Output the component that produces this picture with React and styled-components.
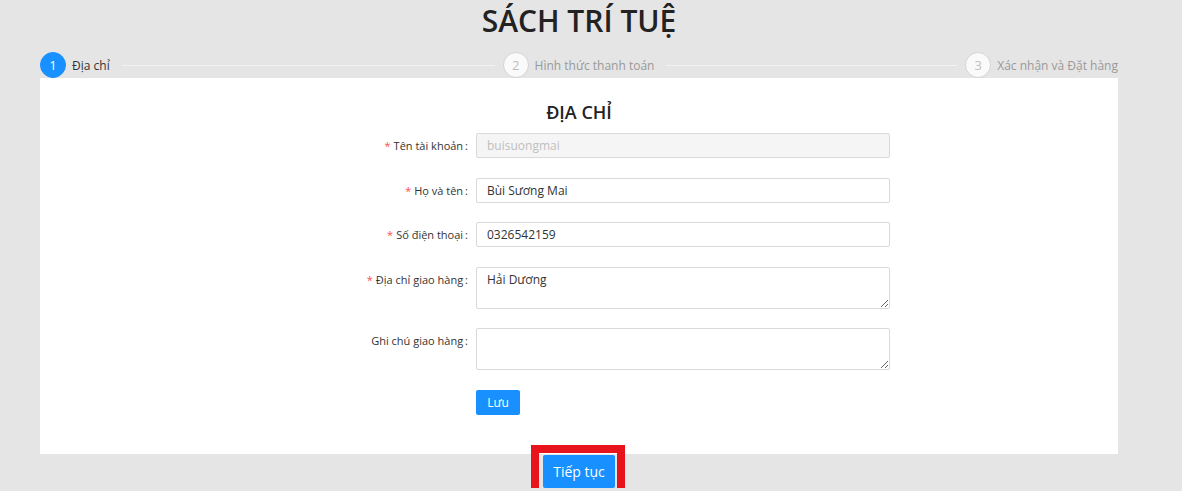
import React from "react";
import styled, { createGlobalStyle } from "styled-components";

const GlobalStyle = createGlobalStyle`
  html, body { margin: 0; padding: 0; }
  body {
    background: #e5e5e5;
    font-family: "Open Sans", "Noto Sans", sans-serif;
    color: rgba(0, 0, 0, 0.85);
  }
  * { box-sizing: border-box; }
`;

const Page = styled.div`
  width: 1078px;
  margin-left: 40px;
  display: flex;
  flex-direction: column;
`;

const Title = styled.h1`
  margin: 0 0 11px;
  text-align: center;
  font-size: 30px;
  font-weight: 600;
  line-height: 41px;
  color: #222;
`;

const Steps = styled.div`
  display: flex;
  align-items: center;
  height: 26px;
`;

const Step = styled.div`
  display: flex;
  align-items: center;
  flex: ${(p) => (p.$last ? "none" : "1 1 0")};
`;

const StepIcon = styled.span`
  width: 26px;
  height: 26px;
  border-radius: 50%;
  display: flex;
  align-items: center;
  justify-content: center;
  font-size: 13px;
  flex: none;
  background: ${(p) => (p.$active ? "#1890ff" : "#fafafa")};
  color: ${(p) => (p.$active ? "#fff" : "#bfbfbf")};
  border: 1px solid ${(p) => (p.$active ? "#1890ff" : "#d4d4d4")};
`;

const StepTitle = styled.span`
  margin-left: 6px;
  font-size: 12px;
  white-space: nowrap;
  color: ${(p) => (p.$active ? "#333" : "#9a9a9a")};
`;

const StepLine = styled.span`
  flex: 1;
  height: 1px;
  margin: 0 8px 0 12px;
  background: #f2f2f2;
`;

const Card = styled.div`
  background: #fff;
  padding: 22px 0 39px;
  display: flex;
  flex-direction: column;
`;

const Heading = styled.h2`
  margin: 0 0 9px;
  text-align: center;
  font-size: 18px;
  font-weight: 600;
  line-height: 24px;
  color: #222;
`;

const Form = styled.div`
  display: flex;
  flex-direction: column;
  gap: 19.5px;
`;

const Row = styled.div`
  display: grid;
  grid-template-columns: 436px 414px;
  align-items: start;
`;

const Label = styled.label`
  display: flex;
  justify-content: flex-end;
  align-items: center;
  height: 25px;
  padding-right: 8px;
  font-size: 11px;
  color: #333;
  white-space: nowrap;
`;

const Req = styled.span`
  color: #ff4d4f;
  margin-right: 3px;
  font-size: 11px;
`;

const Colon = styled.span`
  margin-left: 2px;
`;

const Input = styled.input`
  height: 25px;
  width: 100%;
  border: 1px solid #d9d9d9;
  border-radius: 2px;
  padding: 0 10px;
  font-family: inherit;
  font-size: 12px;
  color: ${(p) => (p.disabled ? "#bfbfbf" : "#333")};
  background: ${(p) => (p.disabled ? "#f5f5f5" : "#fff")};
  outline: none;
  display: block;
`;

const TextArea = styled.textarea`
  height: 42px;
  width: 100%;
  border: 1px solid #d9d9d9;
  border-radius: 2px;
  padding: 4px 10px;
  font-family: inherit;
  font-size: 12px;
  line-height: 16px;
  color: #333;
  resize: vertical;
  outline: none;
  display: block;
`;

const Button = styled.button`
  display: block;
  border: none;
  border-radius: 2px;
  background: #1890ff;
  color: #fff;
  font-family: inherit;
  cursor: pointer;
  padding: 0;
  width: ${(p) => p.$w}px;
  height: ${(p) => p.$h}px;
  font-size: ${(p) => p.$fs}px;
`;

const Footer = styled.div`
  display: flex;
  justify-content: center;
  padding-top: 1px;
`;

const Highlight = styled(Button)`
  position: relative;
  overflow: visible;
  &::after {
    content: "";
    position: absolute;
    left: -12px;
    right: -10px;
    top: -10px;
    bottom: -10px;
    border: 8px solid #e8141c;
    pointer-events: none;
  }
`;

const steps = ["Địa chỉ", "Hình thức thanh toán", "Xác nhận và Đặt hàng"];

const fields = [
  { label: "Tên tài khoản", required: true, value: "buisuongmai", disabled: true },
  { label: "Họ và tên", required: true, value: "Bùi Sương Mai" },
  { label: "Số điện thoại", required: true, value: "0326542159" },
  { label: "Địa chỉ giao hàng", required: true, value: "Hải Dương", area: true },
  { label: "Ghi chú giao hàng", required: false, value: "", area: true },
];

export default function App() {
  return (
    <>
      <GlobalStyle />
      <Page>
        <Title>SÁCH TRÍ TUỆ</Title>
        <Steps>
          {steps.map((s, i) => {
            const last = i === steps.length - 1;
            return (
              <Step key={s} $last={last}>
                <StepIcon $active={i === 0}>{i + 1}</StepIcon>
                <StepTitle $active={i === 0}>{s}</StepTitle>
                {!last && <StepLine />}
              </Step>
            );
          })}
        </Steps>
        <Card>
          <Heading>ĐỊA CHỈ</Heading>
          <Form>
            {fields.map((f) => (
              <Row key={f.label}>
                <Label>
                  {f.required && <Req>*</Req>}
                  {f.label}
                  <Colon>:</Colon>
                </Label>
                {f.area ? (
                  <TextArea defaultValue={f.value} />
                ) : (
                  <Input defaultValue={f.value} disabled={f.disabled} />
                )}
              </Row>
            ))}
            <Row>
              <span />
              <div>
                <Button $w={44} $h={25} $fs={12}>Lưu</Button>
              </div>
            </Row>
          </Form>
        </Card>
        <Footer>
          <Highlight $w={72} $h={33} $fs={14}>Tiếp tục</Highlight>
        </Footer>
      </Page>
    </>
  );
}
